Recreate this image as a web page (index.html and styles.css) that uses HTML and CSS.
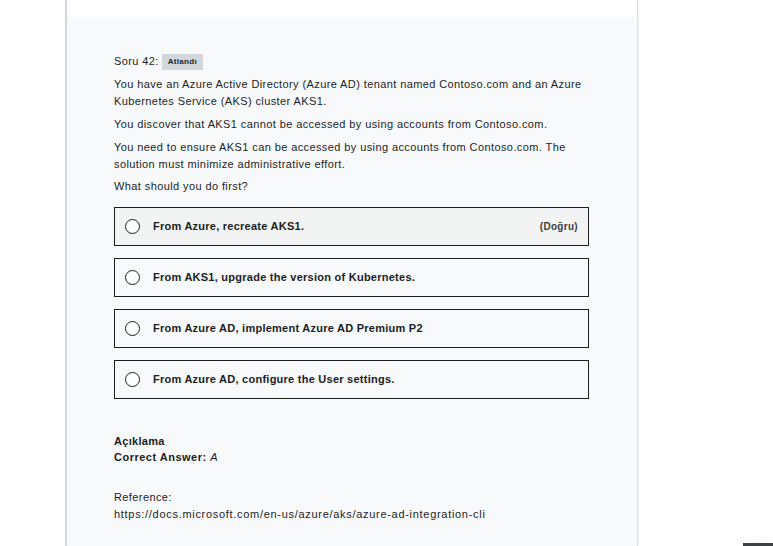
FILE: index.html
```html
<!DOCTYPE html>
<html lang="tr">
<head>
<meta charset="utf-8">
<title>Soru 42</title>
<link rel="stylesheet" href="styles.css">
</head>
<body>
<div class="panel">
  <div class="panel-top"></div>
  <div class="question">
    <div class="q-head">
      <span>Soru 42:</span>
      <span class="badge">Atlandı</span>
    </div>
    <p>You have an Azure Active Directory (Azure AD) tenant named Contoso.com and an Azure Kubernetes Service (AKS) cluster AKS1.</p>
    <p>You discover that AKS1 cannot be accessed by using accounts from Contoso.com.</p>
    <p>You need to ensure AKS1 can be accessed by using accounts from Contoso.com. The solution must minimize administrative effort.</p>
    <p class="last">What should you do first?</p>

    <ul class="options">
      <li class="option correct">
        <span class="radio"></span>
        <span class="opt-text">From Azure, recreate AKS1.</span>
        <span class="tag">(Doğru)</span>
      </li>
      <li class="option">
        <span class="radio"></span>
        <span class="opt-text">From AKS1, upgrade the version of Kubernetes.</span>
      </li>
      <li class="option">
        <span class="radio"></span>
        <span class="opt-text">From Azure AD, implement Azure AD Premium P2</span>
      </li>
      <li class="option">
        <span class="radio"></span>
        <span class="opt-text">From Azure AD, configure the User settings.</span>
      </li>
    </ul>

    <div class="explain">
      <div class="explain-title">Açıklama</div>
      <div class="answer"><strong>Correct Answer:</strong> <em>A</em></div>
      <div class="ref">
        <div>Reference:</div>
        <div class="url">https://docs.microsoft.com/en-us/azure/aks/azure-ad-integration-cli</div>
      </div>
    </div>
  </div>
</div>
<div class="toast"></div>
</body>
</html>
```

FILE: styles.css
```css
* { box-sizing: border-box; }
html, body { height: 100%; }
body {
  margin: 0;
  background: #ffffff;
  font-family: "Liberation Sans", Arial, sans-serif;
  color: #1c1d1f;
  overflow: hidden;
}
.panel {
  margin-left: 65px;
  width: 573px;
  min-height: 546px;
  border-left: 2px solid #d1d7dc;
  border-right: 1px solid #dcdfe2;
  box-shadow: 1px 0 3px rgba(0,0,0,0.06);
  background: #f7f9fa;
}
.panel-top {
  height: 17px;
  background: #ffffff;
}
.question {
  padding: 36px 48px 0 47px;
  font-size: 11px;
  line-height: 17px;
  letter-spacing: 0.4px;
}
.q-head {
  display: flex;
  align-items: center;
  gap: 3px;
  height: 17px;
  margin-bottom: 6px;
}
.badge {
  background: #d1d7dc;
  font-size: 8px;
  font-weight: 700;
  line-height: 10px;
  letter-spacing: 0.3px;
  padding: 3px 6px;
}
p { margin: 0 0 6px 0; }
p.last { margin-top: -1px; }
.options {
  list-style: none;
  margin: 12px 0 0 0;
  padding: 0;
  display: flex;
  flex-direction: column;
  gap: 12px;
  width: 475px;
}
.option {
  display: flex;
  align-items: center;
  height: 39px;
  border: 1px solid #1c1d1f;
  padding: 0 10px 0 10px;
  font-weight: 700;
  letter-spacing: 0.25px;
}
.option.correct { background: #f1f4f2; }
.radio {
  width: 15px;
  height: 15px;
  border: 1px solid #1c1d1f;
  border-radius: 50%;
  background: #ffffff;
  margin-right: 13px;
  flex: none;
}
.opt-text { flex: 1; }
.tag {
  font-size: 10px;
  letter-spacing: 0.3px;
  color: #3e4143;
}
.explain { margin-top: 34px; }
.explain-title { font-weight: 700; line-height: 16px; letter-spacing: 0.3px; }
.answer { line-height: 16px; }
.answer strong { letter-spacing: 0.5px; }
.answer em { font-weight: 400; }
.ref { margin-top: 24px; }
.url { letter-spacing: 0.7px; }
.toast {
  position: absolute;
  right: 0;
  bottom: 0;
  width: 30px;
  height: 3px;
  background: #3e4143;
  box-shadow: 0 -2px 10px rgba(0,0,0,0.08);
}
```
